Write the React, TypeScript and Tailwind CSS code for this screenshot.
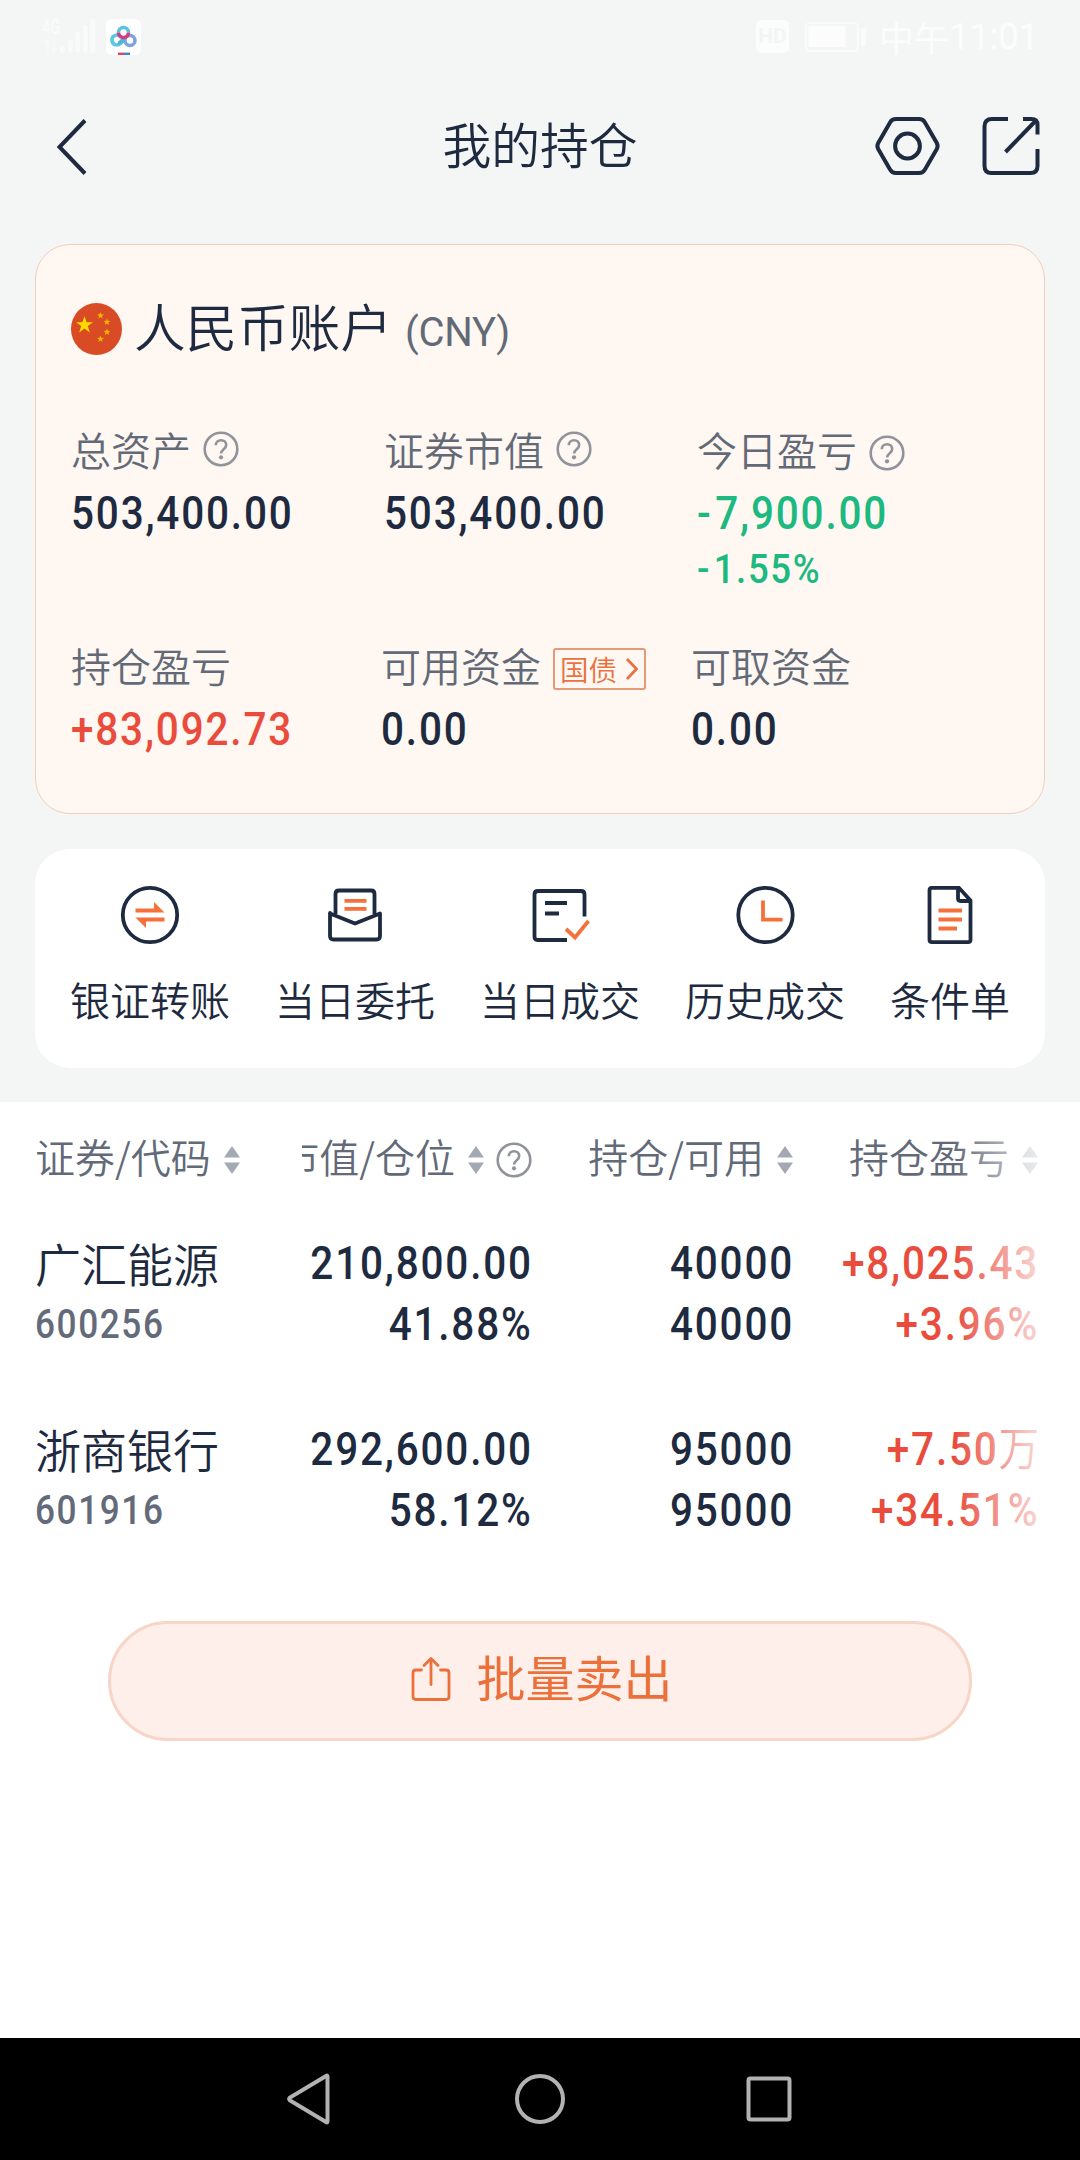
import type { ReactNode } from 'react';

const holdings = [
    { name: '广汇能源', code: '600256', value: '210,800.00', ratio: '41.88%', amount: '40000', usable: '40000', profit: '+8,025.43', unit: '', rate: '+3.96%' },
    { name: '浙商银行', code: '601916', value: '292,600.00', ratio: '58.12%', amount: '95000', usable: '95000', profit: '+7.50', unit: '万', rate: '+34.51%' },
];

const numSizes = {
    lg: 'text-[46px] font-medium',
    md: 'text-[41.500px] font-medium',
    sm: 'text-[40px] font-medium',
};

// Narrow figures: Roboto squeezed a little and tracked out
function Num({ children, size = 'lg', right = false, className = '' }: { children: ReactNode; size?: 'lg' | 'md' | 'sm'; right?: boolean; className?: string }) {
    return (
        <div className={`flex font-['Roboto','Noto_Sans_CJK_SC',sans-serif] leading-[48px] h-12 tracking-[0.045em] whitespace-nowrap ${right ? 'justify-end' : ''} ${numSizes[size]} ${className}`}>
            <span className={`shrink-0 scale-x-[0.88] ${right ? 'origin-right -mr-px' : 'origin-left'}`}>{children}</span>
        </div>
    );
}

function Help({ className = '' }: { className?: string }) {
    return (
        <svg className={`w-9 h-9 shrink-0 ${className}`} viewBox="0 0 36 36" fill="none" stroke="#90939b" strokeWidth="2.6">
            <circle cx="18" cy="18" r="16.3" />
            <path d="M12.8 14.2c0-3 2.2-5 5.2-5s5.200 1.900 5.200 4.700c0 4.200-5.100 4.300-5.100 8.600" />
            <circle cx="18" cy="26.300" r="2.100" fill="#90939b" stroke="none" />
        </svg>
    );
}

function Sort({ className = '' }: { className?: string }) {
    return (
        <svg className={`w-4 h-7 shrink-0 ${className}`} viewBox="0 0 16 28" fill="#a3a9b3">
            <path d="M8 0L16 11.500H0z" />
            <path d="M8 28L16 16.500H0z" />
        </svg>
    );
}

function Label({ children }: { children: ReactNode }) {
    return <div className="flex items-center h-12 text-[40px] leading-[48px] text-[#636a77] whitespace-nowrap">{children}</div>;
}

function Action({ label, children }: { label: string; children: ReactNode }) {
    return (
        <div className="flex flex-col items-center">
            <svg className="w-[60px] h-[60px]" viewBox="0 0 60 60" fill="none" stroke="#1e2a40" strokeWidth="3.800">
                {children}
            </svg>
            <span className="mt-[30px] text-[40px] leading-[48px] text-[#1e2a40] whitespace-nowrap">{label}</span>
        </div>
    );
}

export default function App() {
    return (
        <div className="w-[1080px] h-[2160px] flex flex-col overflow-hidden bg-[#f4f6f6] text-[#1e2a40] font-['Noto_Sans_CJK_SC',sans-serif] font-[350]">
            {/* Status bar */}
            <div className="h-[72px] flex items-start justify-between pl-[41px] pr-[46px] pt-[18px] text-[#fbfcfc]">
                <div className="flex">
                    <svg className="w-[56px] h-[38px] overflow-visible" viewBox="0 0 56 38" fill="#f9fafa">
                        <text x="1" y="16" fontFamily="Roboto" fontWeight="700" fontSize="20" textLength="18" lengthAdjust="spacingAndGlyphs">4G</text>
                        <path d="M4 22l4 0v13h-2v-10h-2zM12 22h2v8h3l-4 5-4-5h3z" opacity="0.6" />
                        <rect x="19" y="28" width="5" height="7" rx="2.500" />
                        <rect x="27" y="21" width="4.500" height="14" rx="2" />
                        <rect x="34.500" y="14" width="4.500" height="21" rx="2" />
                        <rect x="42" y="7" width="4.500" height="28" rx="2" />
                        <rect x="49" y="1" width="5" height="34" rx="2" />
                    </svg>
                    <svg className="w-9 h-9 ml-[9px] mt-px" viewBox="0 0 36 36">
                        <rect width="35" height="36" rx="6" fill="#fff" />
                        <g fill="none" strokeWidth="3.600">
                            <path d="M19 20c-3 3-5 6-8.500 6a5 5 0 1 1 5-7" stroke="#5cc8e2" />
                            <circle cx="24" cy="21.500" r="5" stroke="#7ea4dd" />
                            <path d="M12 24c3 0 4-3 7.500-6" stroke="#4fb4dc" />
                            <path d="M12.500 13.500a5 5 0 0 1 10 0" stroke="#5cc0de" />
                            <path d="M12.500 13.500a5 5 0 0 0 10 0" stroke="#d33c80" />
                        </g>
                        <path d="M12 34.800h6" stroke="#d8456f" strokeWidth="2.400" />
                        <path d="M18 34.800h6" stroke="#3f86cf" strokeWidth="2.400" />
                    </svg>
                </div>
                <div className="flex items-start">
                    <div className="w-[33px] h-[33px] mt-[2px] rounded-[5px] bg-[#fbfcfc] text-[#f3f5f5] font-['Roboto'] font-bold text-[21px] leading-[33px] text-center">HD</div>
                    <svg className="w-[62px] h-[30px] ml-[16px] mt-[4px]" viewBox="0 0 62 30" fill="none">
                        <rect x="1" y="1" width="52" height="28" rx="4" stroke="#fafbfb" strokeWidth="2" />
                        <rect x="3.500" y="4" width="37" height="21" fill="#fcfcfc" />
                        <rect x="56" y="6" width="5" height="18" rx="2" fill="#fafbfb" />
                    </svg>
                    <div className="ml-3 -mt-[2px] w-[155px] flex items-center text-[35px] leading-[42px] font-normal whitespace-nowrap">
                        中午<span className="font-['Roboto'] text-[37px] tracking-[-0.500px]">11:01</span>
                    </div>
                </div>
            </div>

            {/* Title bar */}
            <div className="h-[148px] flex items-center justify-between pl-[56px] pr-[38px]">
                <svg className="w-[152px] h-[60px]" viewBox="0 0 152 60" fill="none" stroke="#1e2a40" strokeWidth="4">
                    <path d="M29 4.500L3.500 31L29 57.500" />
                </svg>
                <h1 className="text-[48.800px] leading-[60px] h-[67px]">我的持仓</h1>
                <svg className="w-[170px] h-[62px]" viewBox="0 0 170 62" fill="none" stroke="#1e2a40" strokeWidth="4">
                    <path d="M24 4h23q4 0 5.800 3.200l12 20.800q1.600 3 0 6l-12 20.800q-1.800 3.200-5.800 3.200H24q-4 0-5.800-3.200L6.200 34q-1.600-3 0-6l12-20.800Q20 4 24 4z" />
                    <circle cx="35.500" cy="31" r="12.400" />
                    <path d="M136 4h-16q-7.500 0-7.500 7.500v39.500q0 7 7 7h39q7 0 7-7V34M165.500 19.500V10q0-6-6-6h-8.500" />
                    <path d="M133.500 37L163.500 6" />
                </svg>
            </div>

            {/* Account card */}
            <div className="mx-[35px] mt-6 h-[570px] shrink-0 rounded-[35px] border border-[#f3cdbd] bg-[#fff7f1] pl-[35px] pt-[57px]">
                <div className="flex items-center h-[54px]">
                    <svg className="w-[52px] h-[54px]" viewBox="0 0 52 54">
                        <ellipse cx="25.500" cy="27" rx="25.500" ry="26" fill="#d84b24" />
                        <path d="M13.500 14l2.100 6.200h6.400l-5.200 3.900 2 6.300-5.300-3.900-5.300 3.900 2-6.300L5 20.200h6.400z" fill="#ffdb00" />
                        <g fill="#f5b400">
                            <path id="s" d="M29.500 10l.9 2.300 2.500.1-1.900 1.600.6 2.400-2.100-1.300-2.100 1.300.6-2.400-1.900-1.600 2.500-.1z" />
                            <use href="#s" x="6.500" y="6.500" />
                            <use href="#s" x="6.500" y="16.500" />
                            <use href="#s" y="23.500" />
                        </g>
                    </svg>
                    <span className="ml-[11px] h-[61px] text-[51.600px] leading-[52px]">人民币账户</span>
                    <span className="ml-[13px] mt-[7px] font-['Roboto'] font-normal text-[40px] leading-[48px] tracking-[-0.200px] text-[#636a77]">(CNY)</span>
                </div>

                <div className="mt-[69px] flex">
                    <div className="w-[313px]">
                        <Label>总资产<Help className="ml-3" /></Label>
                        <Num className="mt-4">503,400.00</Num>
                    </div>
                    <div className="w-[313px]">
                        <Label>证券市值<Help className="ml-3" /></Label>
                        <Num className="mt-4">503,400.00</Num>
                    </div>
                    <div className="text-[#1cb980]">
                        <Label>今日盈亏<Help className="ml-3 mt-[7px]" /></Label>
                        <Num className="mt-4"><span className="mr-[3px]">-</span>7,900.00</Num>
                        <Num className="mt-2" size="md"><span className="mr-[3px]">-</span>1.55%</Num>
                    </div>
                </div>

                <div className="mt-12 flex">
                    <div className="w-[310px] text-[#e94b3c]">
                        <Label>持仓盈亏</Label>
                        <Num className="mt-4">+83,092.73</Num>
                    </div>
                    <div className="w-[310px]">
                        <Label>
                            可用资金
                            <span className="ml-3 mt-[7px] w-[93px] h-[42px] flex items-center rounded-[3px] border-2 border-[#e39a78] pl-[5px] text-[28.500px] leading-[38px] text-[#ea7140]">
                                国债
                                <svg className="w-[14px] h-[24px] ml-2" viewBox="0 0 14 24" fill="none" stroke="#ea7140" strokeWidth="2.800">
                                    <path d="M2 2l9.500 10L2 22" />
                                </svg>
                            </span>
                        </Label>
                        <Num className="mt-4">0.00</Num>
                    </div>
                    <div>
                        <Label>可取资金</Label>
                        <Num className="mt-4">0.00</Num>
                    </div>
                </div>
            </div>

            {/* Quick actions */}
            <div className="mx-[35px] mt-[35px] h-[219px] shrink-0 rounded-[35px] bg-white flex justify-between px-[35px] pt-9">
                <Action label="银证转账">
                    <circle cx="30" cy="30" r="27.200" />
                    <path d="M15.500 23.500H34V17l10.500 10.500h-29zM44.500 36.500H26V43L15.500 32.500h29z" fill="#f5713b" stroke="none" />
                </Action>
                <Action label="当日委托">
                    <path d="M10.500 29V9q0-3.500 3.500-3.500h32q3.500 0 3.500 3.500v20" />
                    <path d="M5 28v23q0 3.500 3.500 3.500h43q3.500 0 3.500-3.500V28.500L30 38.500 5 28.500z" strokeLinejoin="round" />
                    <path d="M19.500 15.800h22M19.500 23.800h22" stroke="#f5713b" />
                </Action>
                <Action label="当日成交">
                    <path d="M37 55H7.500Q4.500 55 4.500 51.500V9.500q0-3.500 3.500-3.500h43q3.500 0 3.500 3.500v22" />
                    <path d="M15 18h22M15 28.500h14" />
                    <path d="M36 44l9 8.500 13.500-16.500" stroke="#f5713b" />
                </Action>
                <Action label="历史成交">
                    <circle cx="30.500" cy="30" r="27.200" />
                    <path d="M28 15.500v19.200h19.500" stroke="#f5713b" />
                </Action>
                <Action label="条件单">
                    <path d="M39 2.800H12q-2.500 0-2.500 2.500v49.400q0 2.500 2.500 2.500h36q2.500 0 2.500-2.500V15.500z" />
                    <path d="M38 3v10.500q0 2.500 2.500 2.500h10" />
                    <path d="M18.500 25.500h23.500M18.500 34.500h23.500M18.500 43.500h18.500" stroke="#f5713b" />
                </Action>
            </div>

            {/* Holdings */}
            <div className="relative mt-[34px] h-[936px] shrink-0 bg-white">
                <div className="grid grid-cols-[267px_230px_261px_245px] pl-[35px] pt-[30px]">
                    <Label>证券/代码<Sort className="ml-[13px] mt-2" /></Label>
                    <div className="flex justify-end overflow-hidden">
                        <Label>市值/仓位<Sort className="ml-[13px] mt-2" /><Help className="ml-3 mt-2" /></Label>
                    </div>
                    <div className="flex justify-end">
                        <Label>持仓/可用<Sort className="ml-[13px] mt-2" /></Label>
                    </div>
                    <div className="flex justify-end">
                        <Label>持仓盈亏<Sort className="ml-[13px] mt-2" /></Label>
                    </div>
                </div>

                <div className="mt-[59px] flex flex-col gap-[76px]">
                    {holdings.map((item) => (
                        <div key={item.code} className="grid grid-cols-[267px_230px_261px_245px] pl-[35px]">
                            <div>
                                <div className="h-12 text-[46px] leading-[46px]">{item.name}</div>
                                <Num className="mt-[14px] text-[#636b7b]" size="sm">{item.code}</Num>
                            </div>
                            <div>
                                <Num right>{item.value}</Num>
                                <Num right className="mt-[13px]">{item.ratio}</Num>
                            </div>
                            <div>
                                <Num right>{item.amount}</Num>
                                <Num right className="mt-[13px]">{item.usable}</Num>
                            </div>
                            <div className="text-[#e94b3c]">
                                <Num right>{item.profit}{item.unit && <span className="text-[46px] font-[350] tracking-normal">{item.unit}</span>}</Num>
                                <Num right className="mt-[13px]">{item.rate}</Num>
                            </div>
                        </div>
                    ))}
                </div>

                <div className="absolute right-0 top-0 w-[126px] h-[460px] bg-gradient-to-r from-white/0 via-white/70 via-60% to-white" />

                <button className="mx-auto mt-[86px] flex h-[120px] w-[864px] items-center justify-center rounded-full border-[3px] border-[#f8d5c7] bg-[#ffefea] text-[#ec7039] text-[49px]">
                    <svg className="w-[44px] h-[48px] mr-[25px] -mt-1" viewBox="0 0 44 48" fill="none" stroke="#ec7039" strokeWidth="2.800" strokeLinecap="round" strokeLinejoin="round">
                        <path d="M14.500 15H9q-3 0-3 3v23.500q0 3 3 3h30q3 0 3-3V18q0-3-3-3h-5.500" />
                        <path d="M24 29.500V4M17 10.500l7-7 7 7" />
                    </svg>
                    <span className="-mt-[11px] font-normal">批量卖出</span>
                </button>
            </div>

            {/* System navigation */}
            <div className="h-[122px] shrink-0 bg-black">
                <svg className="w-[1080px] h-[122px]" viewBox="0 0 1080 122" fill="none" stroke="#b2b2b2" strokeWidth="4">
                    <path d="M327.500 38.500v45q0 1.500-1.500 .5L290 62.500q-1.500-1.500 0-3L326 38q1.500-1 1.500 .5z" />
                    <circle cx="540" cy="61" r="23" />
                    <rect x="748.500" y="40.500" width="41" height="41" rx="2" />
                </svg>
            </div>
        </div>
    );
}
